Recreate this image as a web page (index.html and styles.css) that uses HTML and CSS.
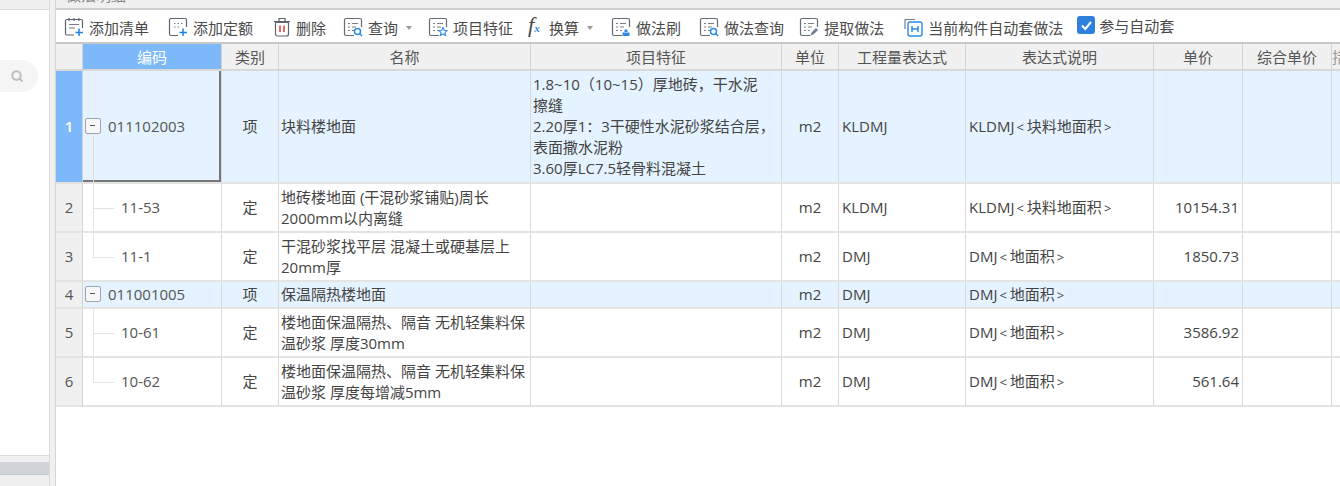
FILE: index.html
```html
<!DOCTYPE html>
<html lang="zh">
<head>
<meta charset="utf-8">
<title>做法</title>
<link rel="stylesheet" href="styles.css">
</head>
<body>
<svg class="defs" width="0" height="0">
  <symbol id="doc" viewBox="0 0 20 20">
    <path d="M11 18.5H3a1.500 1.500 0 0 1-1.500-1.500V3A1.500 1.500 0 0 1 3 1.500H17A1.500 1.500 0 0 1 18.500 3V10" fill="none" stroke="#666c75" stroke-width="1.200"/>
    <path d="M5 6.500H7M9 6.500H15M5 10H7M9 10H13M5 13.500H7M9 13.500H11" fill="none" stroke="#7b8088" stroke-width="1.100"/>
  </symbol>
</svg>
<div class="app">
  <aside class="side">
    <div class="side-top"></div>
    <div class="side-body">
      <div class="search">
        <svg class="search-ico" width="14" height="14" viewBox="0 0 14 14"><circle cx="6.500" cy="6.500" r="4.200" fill="none" stroke="#bdbdbd" stroke-width="2"/><path d="M9.500 9.500L12.500 12.500" stroke="#bdbdbd" stroke-width="2"/></svg>
      </div>
    </div>
    <div class="side-bottom"><div class="side-scroll"></div></div>
  </aside>
  <div class="gutter"></div>
  <main class="main">
    <div class="titlebar"><span class="title-clip">做法明细</span></div>
    <div class="toolbar">
      <div class="tool"><svg class="ico" viewBox="0 0 20 20"><path d="M10 18H3a1.500 1.500 0 0 1-1.500-1.500V4A1.500 1.500 0 0 1 3 2.500H17A1.500 1.500 0 0 1 18.500 4V11M5 1V4M10 1V4M15 1V4" fill="none" stroke="#5f656e" stroke-width="1.200"/><path d="M5 7.500H15M5 11H11" stroke="#777c84" stroke-width="1.100"/><path d="M15 11.500V19M11.500 15.500H19" stroke="#1f80e8" stroke-width="1.500"/></svg>添加清单</div>
      <div class="tool"><svg class="ico" viewBox="0 0 20 20"><path d="M10 18.500H3a1.500 1.500 0 0 1-1.500-1.500V3A1.500 1.500 0 0 1 3 1.500H17A1.500 1.500 0 0 1 18.500 3V10" fill="none" stroke="#5f656e" stroke-width="1.200"/><path d="M6 6.500H7.500M9.500 6.500H11M13 6.500H14.500M6 10H7.500M9.500 10H11" stroke="#6b7fa0" stroke-width="1.200"/><path d="M15 11.500V19M11.500 15.500H19" stroke="#1f80e8" stroke-width="1.500"/></svg>添加定额</div>
      <div class="tool gap17"><svg class="ico ico-narrow" viewBox="0 0 20 20"><path d="M3.500 5.500H16.500V17A2 2 0 0 1 14.500 19H5.500A2 2 0 0 1 3.500 17ZM2 4.500H18M7 4V1.500H13V4" fill="none" stroke="#5f656e" stroke-width="1.200"/><path d="M8 8.500V15M12 8.500V15" stroke="#e03b3b" stroke-width="1.500"/></svg>删除</div>
      <div class="tool gap16"><svg class="ico"><use href="#doc"/><circle cx="14.500" cy="14.500" r="3" fill="#fff" stroke="#2d8ae8" stroke-width="1.500"/><path d="M16.500 16.500L19 19" stroke="#2d8ae8" stroke-width="1.500"/></svg>查询<span class="caret"></span></div>
      <div class="tool gap15"><svg class="ico"><use href="#doc"/><path d="M15 10.500L16.300 13.300 19 13.700 17 15.600 17.600 18.500 15 17 12.400 18.500 13 15.600 11 13.700 13.700 13.300Z" fill="#fff" stroke="#2d8ae8" stroke-width="1.100"/></svg>项目特征</div>
      <div class="tool gap18"><span class="fx"><i>f</i><b>x</b></span>换算<span class="caret"></span></div>
      <div class="tool gap18"><svg class="ico"><use href="#doc"/><path d="M11.500 19V15.500H18.500V19ZM13.500 15V12.500H16.500V15" fill="#2d8ae8"/></svg>做法刷</div>
      <div class="tool gap15"><svg class="ico"><use href="#doc"/><circle cx="14.500" cy="14.500" r="3" fill="#fff" stroke="#2d8ae8" stroke-width="1.500"/><path d="M16.500 16.500L19 19" stroke="#2d8ae8" stroke-width="1.500"/></svg>做法查询</div>
      <div class="tool"><svg class="ico"><use href="#doc"/><path d="M11 19L13 15 17 11 19 13 15 17Z" fill="#6d7d92"/></svg>提取做法</div>
      <div class="tool gap14"><svg class="ico" viewBox="0 0 20 20"><path d="M2 12V2.500H12" fill="none" stroke="#777c84" stroke-width="1.200"/><rect x="5" y="5" width="14" height="14" rx="2" fill="#fff" stroke="#2d8ae8" stroke-width="1.400"/><path d="M9 9V15M15 9V15M9 12H15" stroke="#2d8ae8" stroke-width="1.500" fill="none"/></svg>当前构件自动套做法</div>
      <label class="check"><span class="box"><svg width="17" height="17" viewBox="0 0 17 17"><path d="M4 8.500L7.300 12 13 5" fill="none" stroke="#fff" stroke-width="2"/></svg></span>参与自动套</label>
    </div>
    <table class="grid">
      <colgroup>
        <col class="c-no"><col class="c-code"><col class="c-type"><col class="c-name"><col class="c-feat"><col class="c-unit"><col class="c-expr"><col class="c-desc"><col class="c-price"><col class="c-total"><col class="c-more">
      </colgroup>
      <thead>
        <tr>
          <th></th><th class="th-active">编码</th><th>类别</th><th>名称</th><th>项目特征</th><th>单位</th><th>工程量表达式</th><th>表达式说明</th><th>单价</th><th>综合单价</th><th class="th-more">措</th>
        </tr>
      </thead>
      <tbody>
        <tr class="parent r-big">
          <td class="no no-active">1</td>
          <td class="code selected"><span class="tree-stub"></span><span class="minus"></span>011102003</td>
          <td class="ctr">项</td><td class="name">块料楼地面</td>
          <td class="feat">1.8~10（10~15）厚地砖，干水泥<br>擦缝<br>2.20厚1：3干硬性水泥砂浆结合层，<br>表面撒水泥粉<br>3.60厚LC7.5轻骨料混凝土</td>
          <td class="ctr">m2</td><td>KLDMJ</td><td>KLDMJ<span class="ang">&lt;</span>块料地面积<span class="ang">&gt;</span></td><td></td><td></td><td></td>
        </tr>
        <tr class="r-two">
          <td class="no">2</td><td class="code child mid">11-53</td><td class="ctr">定</td>
          <td class="name">地砖楼地面 (干混砂浆铺贴)周长2000mm以内离缝</td><td></td><td class="ctr">m2</td><td>KLDMJ</td><td>KLDMJ<span class="ang">&lt;</span>块料地面积<span class="ang">&gt;</span></td><td class="num">10154.31</td><td></td><td></td>
        </tr>
        <tr class="r-two">
          <td class="no">3</td><td class="code child last">11-1</td><td class="ctr">定</td>
          <td class="name">干混砂浆找平层 混凝土或硬基层上20mm厚</td><td></td><td class="ctr">m2</td><td>DMJ</td><td>DMJ<span class="ang">&lt;</span>地面积<span class="ang">&gt;</span></td><td class="num">1850.73</td><td></td><td></td>
        </tr>
        <tr class="parent r-one">
          <td class="no">4</td><td class="code"><span class="minus"></span>011001005</td><td class="ctr">项</td>
          <td class="name">保温隔热楼地面</td><td></td><td class="ctr">m2</td><td>DMJ</td><td>DMJ<span class="ang">&lt;</span>地面积<span class="ang">&gt;</span></td><td></td><td></td><td></td>
        </tr>
        <tr class="r-two">
          <td class="no">5</td><td class="code child mid">10-61</td><td class="ctr">定</td>
          <td class="name">楼地面保温隔热、隔音 无机轻集料保温砂浆 厚度30mm</td><td></td><td class="ctr">m2</td><td>DMJ</td><td>DMJ<span class="ang">&lt;</span>地面积<span class="ang">&gt;</span></td><td class="num">3586.92</td><td></td><td></td>
        </tr>
        <tr class="r-two">
          <td class="no">6</td><td class="code child last">10-62</td><td class="ctr">定</td>
          <td class="name">楼地面保温隔热、隔音 无机轻集料保温砂浆 厚度每增减5mm</td><td></td><td class="ctr">m2</td><td>DMJ</td><td>DMJ<span class="ang">&lt;</span>地面积<span class="ang">&gt;</span></td><td class="num">561.64</td><td></td><td></td>
        </tr>
      </tbody>
    </table>
  </main>
</div>
</body>
</html>
```
FILE: styles.css
```css
* { box-sizing: border-box; }
html, body { margin: 0; height: 100%; overflow: hidden; background: #fff; }
body { font-family: "Open Sans", "Noto Sans CJK SC", sans-serif; font-size: 15px; color: #444; }
.defs { display: block; height: 0; }
.app { display: flex; width: 1340px; height: 486px; }

.side { width: 50px; flex: none; display: flex; flex-direction: column; background: #fff; border-right: 1px solid #dadada; }
.side-top { height: 10px; flex: none; background: #f0f0f0; border-bottom: 1px solid #dadada; }
.side-body { flex: 1; padding-top: 50px; }
.search { width: 38px; height: 32px; background: #f5f5f5; border-radius: 0 16px 16px 0; display: flex; align-items: center; justify-content: flex-end; padding-right: 14px; }
.search-ico { display: block; }
.side-bottom { height: 31px; flex: none; background: #f0f0f0; border-top: 1px solid #dadada; padding-top: 6px; }
.side-scroll { height: 13px; background: #d0d3d8; border-bottom: 1px solid #c4c7cc; }
.gutter { width: 6px; flex: none; background: #f0f0f0; border-right: 1px solid #d4d4d4; }

.main { flex: 1; min-width: 0; display: flex; flex-direction: column; overflow: hidden; }
.titlebar { height: 10px; flex: none; background: #f0f0f0; border-bottom: 2px solid #cfcfcf; overflow: hidden; padding-left: 10px; }
.title-clip { display: block; margin-top: -14px; font-size: 15px; color: #888; line-height: 18px; }
.toolbar { height: 34px; flex: none; display: flex; align-items: center; padding: 3px 0 0 8px; border-bottom: 2px solid #c8c8c8; white-space: nowrap; background: #fff; }
.tool { display: flex; align-items: center; margin-right: 19px; line-height: 20px; color: #4a4a4a; }
.gap18 { margin-right: 18px; }
.gap17 { margin-right: 17px; }
.gap16 { margin-right: 16px; }
.gap15 { margin-right: 15px; }
.gap14 { margin-right: 14px; }
.ico { width: 20px; height: 20px; margin: -2px 5px 0 0; flex: none; }
.ico-narrow { margin-right: 4px; }
.fx { width: 21px; flex: none; margin-top: -2px; font-family: "Liberation Serif", serif; white-space: nowrap; color: #444; }
.fx i { font-size: 22px; line-height: 20px; }
.fx b { font-size: 11px; color: #2d8ae8; font-style: italic; }
.caret { width: 0; height: 0; margin-left: 8px; border: 3px solid transparent; border-top: 4px solid #999; border-bottom: 0; }
.check { display: flex; align-items: center; margin-top: -5px; color: #4a4a4a; }
.box { width: 18px; height: 18px; background: #2f7fdc; border-radius: 3px; margin-right: 4px; display: flex; align-items: center; justify-content: center; }
.box svg { display: block; }

.grid { border-collapse: separate; border-spacing: 0; table-layout: fixed; width: 1284px; }
.c-no { width: 27px; } .c-code { width: 139px; } .c-type { width: 57px; } .c-name { width: 252px; }
.c-feat { width: 251px; } .c-unit { width: 57px; } .c-expr { width: 127px; } .c-desc { width: 188px; }
.c-price { width: 89px; } .c-total { width: 89px; } .c-more { width: 8px; }
th { height: 27px; padding: 0; font-weight: 400; background: #f0f0f0; color: #555; border-right: 1px solid #d4d4d4; border-bottom: 2px solid #d8d8d8; text-align: center; overflow: hidden; white-space: nowrap; line-height: 24px; }
.th-active { background: #7db9fa; color: #fff; }
.th-more { text-align: left; border-right: 0; color: #999; }
td { padding: 0 3px; border-right: 1px solid #d9d9d9; border-bottom: 2px solid #e4e4e4; line-height: 21px; color: #444; vertical-align: middle; overflow: hidden; }
td:last-child { border-right: 0; }
td.name { padding-left: 2px; padding-right: 2px; }
td.feat { padding-left: 2px; white-space: nowrap; }
.ang { font-size: 13px; margin: 0 3px 0 2px; }
.r-big td { height: 113px; }
.r-two td { height: 49px; }
.r-one td { height: 27px; }
.parent td { background: #e4f3ff; }
td.no { background: #f0f0f0; text-align: center; padding: 0; color: #555; border-right: 1px solid #d4d4d4; }
td.no-active { background: #7db9fa; color: #fff; font-weight: 600; }
td.ctr { text-align: center; }
td.num { text-align: right; }
td.code { padding-left: 38px; position: relative; color: #555; }
.parent td.code { padding-left: 25px; }
.minus { position: absolute; left: 2px; top: 50%; margin-top: -9px; width: 16px; height: 16px; border: 1.5px solid #a0a5ac; border-radius: 2px; background: #f5f7f9; }
.minus::after { content: ""; position: absolute; left: 4px; top: 6px; width: 5px; height: 1px; background: #555; }
td.selected { box-shadow: inset -2px -2px 0 #777; }
.tree-stub { position: absolute; left: 10px; top: 64px; height: 47px; width: 1px; background: #dcdcdc; }
.child::before { content: ""; position: absolute; left: 10px; top: 0; width: 1px; background: #e4e4e4; }
.child::after { content: ""; position: absolute; left: 10px; top: 24px; width: 21px; height: 1px; background: #e4e4e4; }
.mid::before { bottom: 0; }
.last::before { height: 24px; }
```
